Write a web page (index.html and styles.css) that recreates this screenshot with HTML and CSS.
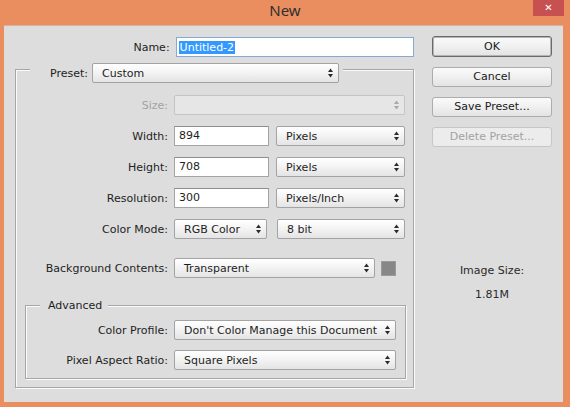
FILE: index.html
```html
<!DOCTYPE html>
<html>
<head>
<meta charset="utf-8">
<title>New</title>
<link rel="stylesheet" href="styles.css">
</head>
<body>
<div class="window">
  <div class="titlebar">
    <span class="tb-side"></span>
    <span class="title">New</span>
    <span class="tb-side tb-right"><span class="close">&#x2715;</span></span>
  </div>
  <div class="dialog">
    <div class="left">
      <div class="name-row">
        <span class="name-label">Name:</span>
        <div class="input name-input"><span class="sel">Untitled-2</span></div>
      </div>

      <div class="group preset-group">
        <div class="group-head">
          <span class="head-label">Preset:</span>
          <div class="select w-preset"><span>Custom</span><svg class="arr" viewBox="0 0 5 10" width="5" height="10"><polygon points="0,4 2.5,0.5 5,4"/><polygon points="0,6 5,6 2.5,9.5"/></svg></div>
        </div>

        <div class="row r-first">
          <span class="lbl disabled-text">Size:</span>
          <div class="select disabled w-size"><span></span><svg class="arr" viewBox="0 0 5 10" width="5" height="10"><polygon points="0,4 2.5,0.5 5,4"/><polygon points="0,6 5,6 2.5,9.5"/></svg></div>
        </div>
        <div class="row">
          <span class="lbl">Width:</span>
          <div class="input w-num">894</div>
          <div class="select w-unit"><span>Pixels</span><svg class="arr" viewBox="0 0 5 10" width="5" height="10"><polygon points="0,4 2.5,0.5 5,4"/><polygon points="0,6 5,6 2.5,9.5"/></svg></div>
        </div>
        <div class="row">
          <span class="lbl">Height:</span>
          <div class="input w-num">708</div>
          <div class="select w-unit"><span>Pixels</span><svg class="arr" viewBox="0 0 5 10" width="5" height="10"><polygon points="0,4 2.5,0.5 5,4"/><polygon points="0,6 5,6 2.5,9.5"/></svg></div>
        </div>
        <div class="row">
          <span class="lbl">Resolution:</span>
          <div class="input w-num">300</div>
          <div class="select w-unit"><span>Pixels/Inch</span><svg class="arr" viewBox="0 0 5 10" width="5" height="10"><polygon points="0,4 2.5,0.5 5,4"/><polygon points="0,6 5,6 2.5,9.5"/></svg></div>
        </div>
        <div class="row">
          <span class="lbl">Color Mode:</span>
          <div class="select w-mode"><span>RGB Color</span><svg class="arr" viewBox="0 0 5 10" width="5" height="10"><polygon points="0,4 2.5,0.5 5,4"/><polygon points="0,6 5,6 2.5,9.5"/></svg></div>
          <div class="select w-bit"><span>8 bit</span><svg class="arr" viewBox="0 0 5 10" width="5" height="10"><polygon points="0,4 2.5,0.5 5,4"/><polygon points="0,6 5,6 2.5,9.5"/></svg></div>
        </div>
        <div class="row r-bg">
          <span class="lbl">Background Contents:</span>
          <div class="select w-bgc"><span>Transparent</span><svg class="arr" viewBox="0 0 5 10" width="5" height="10"><polygon points="0,4 2.5,0.5 5,4"/><polygon points="0,6 5,6 2.5,9.5"/></svg></div>
          <span class="swatch"></span>
        </div>

        <div class="group adv-group">
          <div class="legend">Advanced</div>
          <div class="row r-adv-first">
            <span class="lbl lbl-adv">Color Profile:</span>
            <div class="select w-adv"><span>Don't Color Manage this Document</span><svg class="arr" viewBox="0 0 5 10" width="5" height="10"><polygon points="0,4 2.5,0.5 5,4"/><polygon points="0,6 5,6 2.5,9.5"/></svg></div>
          </div>
          <div class="row r-adv">
            <span class="lbl lbl-adv">Pixel Aspect Ratio:</span>
            <div class="select w-adv"><span>Square Pixels</span><svg class="arr" viewBox="0 0 5 10" width="5" height="10"><polygon points="0,4 2.5,0.5 5,4"/><polygon points="0,6 5,6 2.5,9.5"/></svg></div>
          </div>
        </div>
      </div>
    </div>

    <div class="right">
      <div class="btn btn-default">OK</div>
      <div class="btn">Cancel</div>
      <div class="btn">Save Preset...</div>
      <div class="btn btn-disabled">Delete Preset...</div>
      <div class="info">
        <div class="info-label">Image Size:</div>
        <div class="info-value">1.81M</div>
      </div>
    </div>
  </div>
</div>
</body>
</html>
```

FILE: styles.css
```css
* { box-sizing: border-box; }
html, body { margin: 0; padding: 0; }
body {
  width: 570px;
  height: 407px;
  background: #ea8e60;
  overflow: hidden;
  font-family: "DejaVu Sans", Verdana, sans-serif;
  font-size: 11px;
  color: #1e1e1e;
}
.window { width: 570px; height: 407px; }

.titlebar {
  height: 25px;
  display: grid;
  grid-template-columns: 1fr auto 1fr;
  align-items: start;
}
.title {
  font-family: "Noto Sans", "Open Sans", sans-serif;
  font-size: 15px;
  line-height: 21px;
  color: #2f2f2f;
}
.tb-right { display: flex; justify-content: flex-end; padding-right: 6px; }
.close {
  width: 31px;
  height: 16px;
  background: #c75050;
  color: #fff;
  font-size: 10px;
  line-height: 16px;
  text-align: center;
  font-weight: bold;
}

.dialog {
  margin: 0 7px 0 4px;
  height: 377px;
  background: #dddddd;
  display: flex;
  border-top: 1px solid #d5b29e;
}
.left {
  margin-left: 11px;
  width: 399px;
  padding-top: 11px;
}
.name-row { display: flex; align-items: center; height: 20px; }
.name-label { width: 155px; text-align: right; margin-right: 6px; }

.input {
  height: 20px;
  background: #fff;
  border: 1px solid #a4a4a4;
  border-top-color: #8e8e8e;
  padding-left: 4px;
  line-height: 18px;
  white-space: nowrap;
}
.name-input { width: 239px; border-color: #86a9d4; padding-left: 2px; }
.sel {
  background: #3399ff;
  color: #fff;
  display: inline-block;
  line-height: 13px;
  padding: 0 1px;
  vertical-align: middle;
}

.group {
  border: 1px solid #a6a6a6;
  box-shadow: 1px 1px 0 #fbfbfb, inset 1px 1px 0 #fbfbfb;
}
.preset-group {
  margin-top: 12px;
  padding-bottom: 8px;
}
.group-head {
  margin-top: -7px;
  margin-left: 14px;
  width: max-content;
  padding-right: 4px;
  background: #dddddd;
  display: flex;
  align-items: center;
  height: 20px;
}
.head-label { width: 58px; text-align: right; margin-right: 4px; }

.row { display: flex; align-items: center; height: 20px; margin-top: 11px; }
.r-first { margin-top: 12px; }
.r-bg { margin-top: 19px; }
.lbl { width: 152px; text-align: right; margin-right: 6px; white-space: nowrap; }
.lbl-adv { width: 142px; }
.disabled-text { color: #a3a3a3; }

.select {
  height: 20px;
  border: 1px solid #a3a3a3;
  border-radius: 2px;
  background: linear-gradient(#ffffff, #f4f4f4 45%, #e4e4e4);
  display: flex;
  align-items: center;
  justify-content: space-between;
  padding: 0 5px 0 9px;
  white-space: nowrap;
}
.select .arr { fill: #2a2a2a; flex: none; }
.select.disabled {
  background: #e6e6e6;
  border-color: #c4c4c4;
}
.select.disabled .arr { fill: #a8a8a8; }

.w-preset { width: 247px; }
.w-size { width: 231px; }
.w-num { width: 95px; margin-right: 7px; }
.w-unit { width: 129px; }
.w-mode { width: 93px; margin-right: 10px; }
.w-bit { width: 128px; }
.w-bgc { width: 201px; margin-right: 6px; }
.w-adv { width: 222px; }

.swatch {
  width: 15px;
  height: 15px;
  background: #878787;
  border: 1px solid #9a9a9a;
}

.adv-group {
  margin: 27px 7px 0 9px;
  padding-bottom: 8px;
}
.legend {
  margin-top: -7px;
  margin-left: 14px;
  width: max-content;
  padding: 0 6px 0 8px;
  background: #dddddd;
  line-height: 14px;
  height: 14px;
}
.r-adv-first { margin-top: 7px; }
.r-adv { margin-top: 10px; }

.right {
  margin-left: 18px;
  width: 120px;
  padding-top: 10px;
  display: flex;
  flex-direction: column;
}
.btn {
  height: 20px;
  margin-top: 10px;
  border: 1px solid #acacac;
  border-radius: 3px;
  background: linear-gradient(#fafafa, #f0f0f0 50%, #e3e3e3);
  text-align: center;
  line-height: 18px;
  color: #1a1a1a;
}
.btn-default {
  margin-top: 0;
  height: 21px;
  border: 1px solid #6a6a6a;
  box-shadow: inset 0 0 0 1px #b4b4b4;
  line-height: 19px;
}
.btn-disabled {
  color: #a2a2a2;
  border-color: #c6c6c6;
  background: #ececec;
}
.info { margin-top: 117px; text-align: center; color: #2a2a2a; }
.info-label { line-height: 14px; }
.info-value { line-height: 14px; margin-top: 10px; }
```
